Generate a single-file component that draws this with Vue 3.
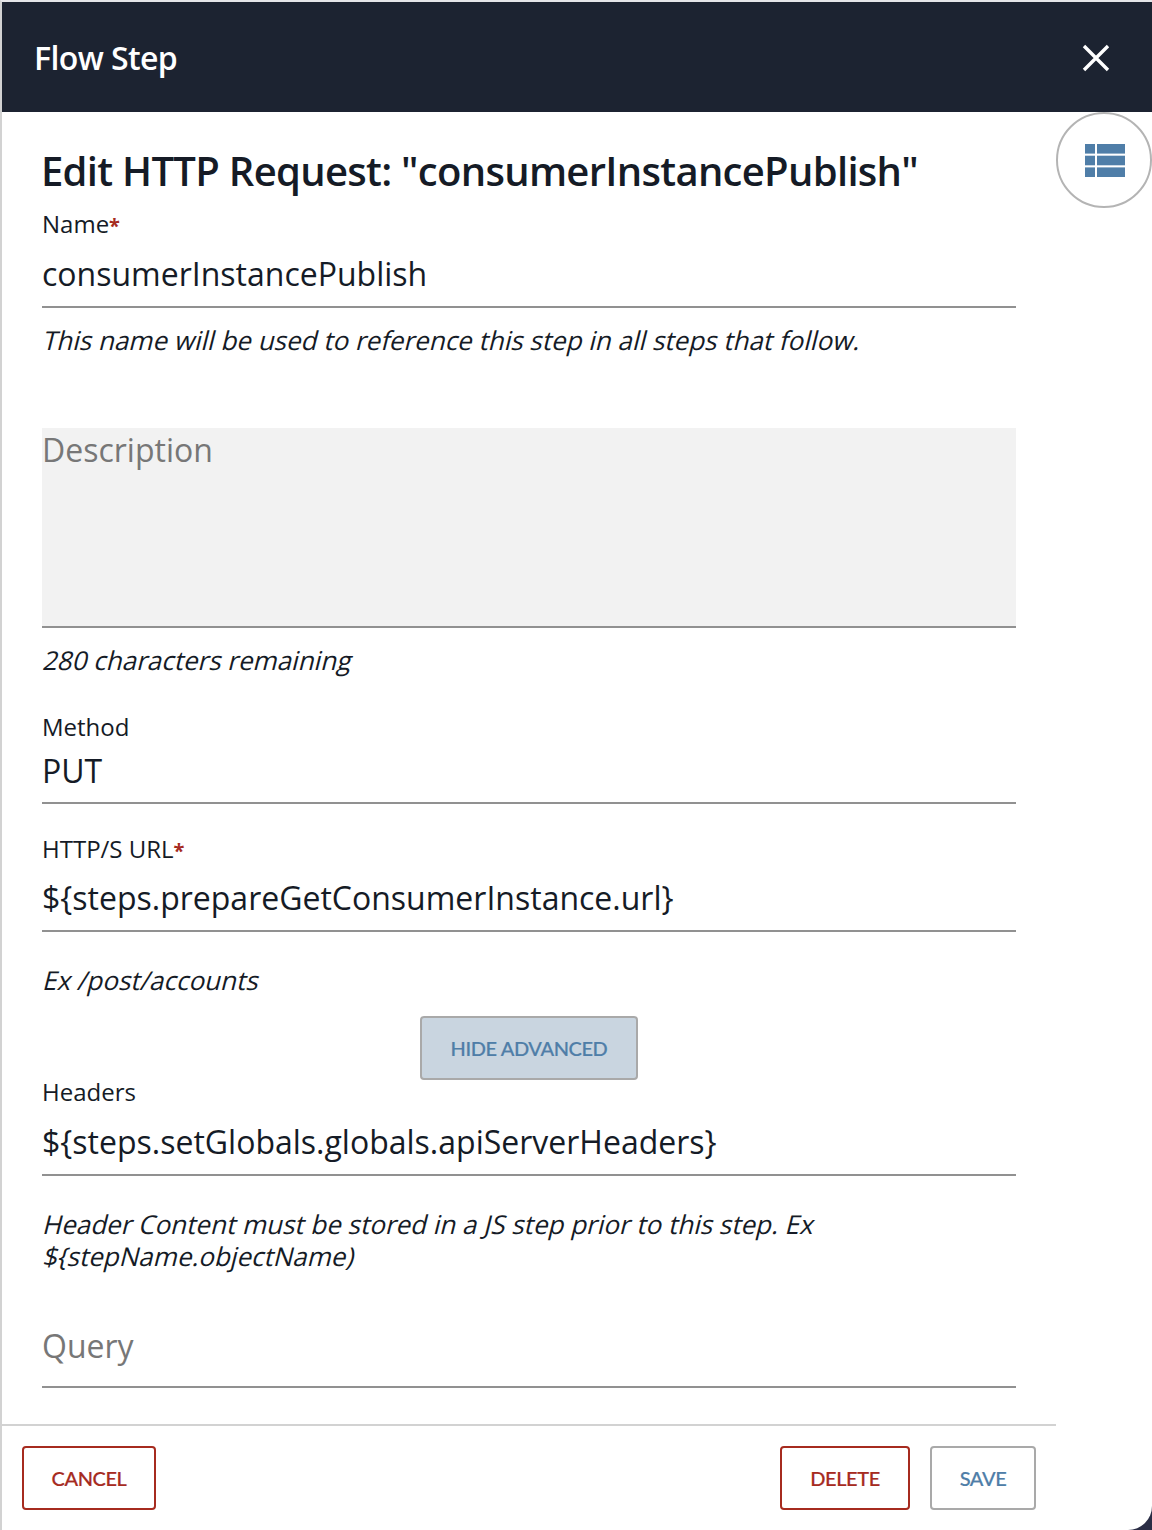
<template>
  <div class="page">
    <div class="panel">
      <header class="topbar">
        <span class="topbar-title">Flow Step</span>
        <svg class="close-icon" width="30" height="30" viewBox="0 0 30 30">
          <path d="M3 3 L27 27 M27 3 L3 27" stroke="#fff" stroke-width="3.4" fill="none" />
        </svg>
      </header>

      <button class="side-toggle" type="button" aria-label="Steps">
        <svg width="40" height="33" viewBox="0 0 40 33">
          <rect v-for="r in iconRects" :key="r.id" :x="r.x" :y="r.y" :width="r.w" height="9.6" fill="#4f7ea8" />
        </svg>
      </button>

      <main class="content">
        <h1 class="heading">Edit HTTP Request: "consumerInstancePublish"</h1>

        <label class="label name-label">Name<span class="req">*</span></label>
        <div class="value line name-value">consumerInstancePublish</div>
        <p class="hint name-hint"><span>This name will be used to reference this step in all steps that follow.</span></p>

        <div class="textarea line">Description</div>
        <p class="hint count-hint"><span>280 characters remaining</span></p>

        <label class="label method-label">Method</label>
        <div class="value line method-value">PUT</div>

        <label class="label url-label">HTTP/S URL<span class="req">*</span></label>
        <div class="value line url-value">${steps.prepareGetConsumerInstance.url}</div>
        <p class="hint"><span>Ex /post/accounts</span></p>

        <div class="advanced-row">
          <button class="btn btn-advanced" type="button">HIDE ADVANCED</button>
        </div>

        <label class="label headers-label">Headers</label>
        <div class="value line headers-value">${steps.setGlobals.globals.apiServerHeaders}</div>
        <p class="hint"><span>Header Content must be stored in a JS step prior to this step. Ex</span><span>${stepName.objectName)</span></p>

        <div class="value line query">Query</div>
      </main>

      <footer class="footer">
        <button class="btn btn-danger cancel" type="button">CANCEL</button>
        <div class="footer-right">
          <button class="btn btn-danger delete" type="button">DELETE</button>
          <button class="btn btn-save" type="button">SAVE</button>
        </div>
      </footer>
    </div>
  </div>
</template>

<script setup>
const iconRects = [
  { id: 'a', x: 0, y: 0, w: 10 },
  { id: 'b', x: 12, y: 0, w: 28 },
  { id: 'c', x: 0, y: 11.7, w: 10 },
  { id: 'd', x: 12, y: 11.7, w: 28 },
  { id: 'e', x: 0, y: 23.4, w: 10 },
  { id: 'f', x: 12, y: 23.4, w: 28 }
]
</script>

<style>
html,
body {
  margin: 0;
  background: #2a2d45;
}
</style>

<style scoped>
.page {
  width: 1152px;
  height: 1530px;
  background: #2a2d45;
  overflow: hidden;
}
.panel {
  position: relative;
  box-sizing: border-box;
  width: 1152px;
  height: 1530px;
  display: flex;
  flex-direction: column;
  background: #fff;
  border-top: 2px solid #e4e5e8;
  border-left: 2px solid #d2d2d2;
  border-bottom-right-radius: 24px;
  overflow: hidden;
  font-family: "Open Sans", sans-serif;
  color: #151b26;
}
.topbar {
  height: 110px;
  flex: none;
  display: flex;
  align-items: center;
  justify-content: space-between;
  padding: 0 41px 0 32px;
  background: #1c2331;
  color: #fff;
}
.topbar-title {
  font-size: 32px;
  font-weight: 600;
  letter-spacing: -0.6px;
}
.close-icon {
  display: block;
  margin-top: 2px;
}
.side-toggle {
  position: absolute;
  top: 110px;
  right: 0;
  box-sizing: border-box;
  width: 96px;
  height: 96px;
  padding: 0 0 0 2px;
  display: flex;
  align-items: center;
  justify-content: center;
  background: #fff;
  border: 2px solid #b4b4b4;
  border-radius: 50%;
}
.content {
  flex: none;
  width: 974px;
  padding: 0 40px;
}
.heading {
  margin: 32px 0 0 -1px;
  font-size: 40px;
  line-height: 54px;
  font-weight: 600;
  letter-spacing: -0.7px;
}
.label {
  display: block;
  font-size: 24px;
  line-height: 32px;
}
.req {
  color: #a62b1f;
  font-size: 20px;
  font-weight: 700;
}
.value {
  margin-top: 12px;
  padding-bottom: 9px;
  font-size: 32px;
  line-height: 44px;
}
.line {
  border-bottom: 2px solid #919191;
}
.hint {
  margin: 32px 0 0;
  font-size: 26px;
  line-height: 32px;
}
.hint span {
  display: block;
  transform: skewX(-14deg);
  transform-origin: left 25px;
}
.name-label {
  margin-top: 10px;
}
.name-value {
  margin-top: 10px;
  padding-bottom: 10px;
}
.name-hint {
  margin-top: 16px;
}
.textarea {
  box-sizing: border-box;
  height: 200px;
  margin-top: 72px;
  background: #f2f2f2;
  color: #777;
  font-size: 32px;
  line-height: 44px;
}
.count-hint {
  margin-top: 16px;
}
.method-label {
  margin-top: 35px;
}
.method-value {
  margin-top: 6px;
}
.url-label {
  margin-top: 29px;
}
.url-value {
  margin-top: 9px;
  padding-bottom: 10px;
}
.advanced-row {
  display: flex;
  justify-content: center;
  margin-top: 20px;
}
.headers-label {
  margin-top: -4px;
}
.headers-value {
  margin-top: 12px;
  padding-bottom: 10px;
}
.query {
  margin-top: 52px;
  padding-bottom: 18px;
  color: #777;
}
.footer {
  box-sizing: border-box;
  width: 1054px;
  height: 106px;
  margin-top: auto;
  display: flex;
  justify-content: space-between;
  padding: 20px 20px 0;
  border-top: 2px solid #d2d2d2;
}
.footer-right {
  display: flex;
  gap: 20px;
}
.btn {
  box-sizing: border-box;
  height: 64px;
  padding: 0;
  background: #fff;
  border: 2px solid #a9a9a9;
  border-radius: 4px;
  font-family: Lato, sans-serif;
  font-size: 20px;
  font-weight: 500;
  letter-spacing: -0.4px;
  -webkit-text-stroke: 0.2px currentColor;
  color: #4f7ea8;
}
.btn-advanced {
  width: 218px;
  background: #c9d5e0;
}
.btn-danger {
  border-color: #a62b1f;
  color: #a62b1f;
}
.cancel {
  width: 134px;
}
.delete {
  width: 130px;
}
.btn-save {
  width: 106px;
}
</style>
